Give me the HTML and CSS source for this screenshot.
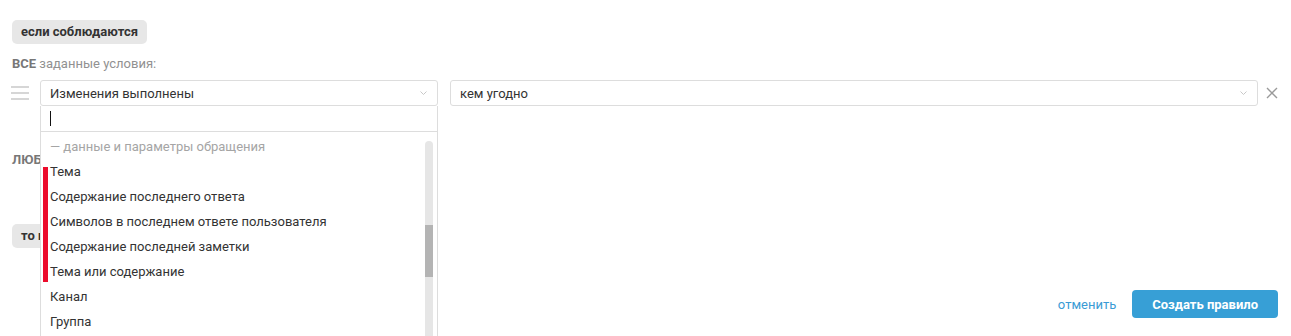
FILE: index.html
```html
<!DOCTYPE html>
<html lang="ru">
<head>
    <meta charset="UTF-8">
    <title>Правило</title>
    <link rel="stylesheet" href="styles.css">
</head>
<body>
    <div class="page">
        <span class="tag">если соблюдаются</span>
        <p class="caption"><b>ВСЕ</b> заданные условия:</p>

        <div class="cond-row">
            <span class="handle"><i></i><i></i><i></i></span>
            <div class="field field-main">
                <div class="select">
                    <span>Изменения выполнены</span>
                    <svg class="chev" width="7" height="4" viewBox="0 0 7 4"><path d="M0.5 0.5 L3.5 3.5 L6.5 0.5" fill="none" stroke="#c8c8c8" stroke-width="1"/></svg>
                </div>
                <div class="dropdown">
                    <div class="search"><span class="cursor"></span></div>
                    <div class="list-wrap">
                        <ul class="list">
                            <li class="group">— данные и параметры обращения</li>
                            <li>Тема</li>
                            <li>Содержание последнего ответа</li>
                            <li>Символов в последнем ответе пользователя</li>
                            <li>Содержание последней заметки</li>
                            <li>Тема или содержание</li>
                            <li>Канал</li>
                            <li>Группа</li>
                        </ul>
                        <div class="scrollbar"><div class="thumb"></div></div>
                    </div>
                    <span class="mark"></span>
                </div>
            </div>
            <div class="field field-who">
                <div class="select">
                    <span>кем угодно</span>
                    <svg class="chev" width="7" height="4" viewBox="0 0 7 4"><path d="M0.5 0.5 L3.5 3.5 L6.5 0.5" fill="none" stroke="#c8c8c8" stroke-width="1"/></svg>
                </div>
            </div>
            <svg class="remove" width="12" height="12" viewBox="0 0 12 12"><path d="M1 1 L11 11 M11 1 L1 11" stroke="#9a9a9a" stroke-width="1.4"/></svg>
        </div>

        <p class="caption caption-any"><b>ЛЮБОЕ</b> из заданных условий:</p>
        <span class="tag tag-then">то применить</span>

        <div class="footer">
            <a href="#" class="cancel">отменить</a>
            <button class="create">Создать правило</button>
        </div>
    </div>
</body>
</html>
```

FILE: styles.css
```css
html, body { height: 100%; }
body { margin: 0; font-family: Roboto, "Liberation Sans", sans-serif; font-size: 13px; color: #333; background: #fff; overflow: hidden; }
.page { min-height: 100%; box-sizing: border-box; padding: 20px 13px 0 12px; }

.tag { display: inline-block; height: 24px; line-height: 24px; padding: 0 9px; background: #e7e7e7; border-radius: 5px; font-size: 13px; font-weight: 700; color: #333; }
.caption { margin: 12px 0 0; font-size: 13px; line-height: 16px; color: #919191; }
.caption b { color: #777; }

.cond-row { display: flex; align-items: center; margin-top: 8px; height: 26px; }
.handle { display: flex; flex-direction: column; gap: 4px; width: 18px; margin: 0 11px 0 -1px; }
.handle i { display: block; height: 2px; background: #d6d6d6; }

.field { position: relative; }
.field-main { width: 398px; }
.field-who { flex: 1; margin-left: 12px; }
.select { display: flex; align-items: center; justify-content: space-between; height: 26px; box-sizing: border-box; padding: 0 10px 0 9px; border: 1px solid #ddd; border-radius: 3px; background: #fff; }
.remove { margin-left: 8px; }

.dropdown { position: absolute; top: 26px; left: 0; right: 0; background: #fff; border: 1px solid #ddd; border-top: none; z-index: 2; }
.search { height: 26px; border-bottom: 1px solid #ddd; padding: 5px 0 0 9px; box-sizing: border-box; }
.cursor { display: block; width: 1px; height: 15px; background: #111; }
.list-wrap { display: flex; height: 204px; overflow: hidden; }
.list { flex: 1; list-style: none; margin: 0; padding: 2px 0 0; }
.list li { height: 25px; line-height: 25px; padding-left: 9px; white-space: nowrap; }
.list .group { color: #a5a5a5; }
.scrollbar { width: 8px; margin: 9px 4px 0 0; background: #e6e6e6; border-radius: 4px 4px 0 0; padding-top: 84px; }
.thumb { height: 52px; background: #b4b4b4; }
.mark { position: absolute; left: 2px; top: 61px; width: 5px; height: 115px; background: #ec0c2c; }

.caption-any { margin-top: 46px; }
.tag-then { margin-top: 56px; }

.footer { display: flex; justify-content: flex-end; align-items: center; gap: 16px; margin-top: 42px; }
.cancel { color: #3a9bd5; text-decoration: none; }
.create { height: 28px; padding: 0 20px; border: none; border-radius: 4px; background: #379fd6; color: #fff; font-family: inherit; font-size: 13px; font-weight: 700; cursor: pointer; }
```
